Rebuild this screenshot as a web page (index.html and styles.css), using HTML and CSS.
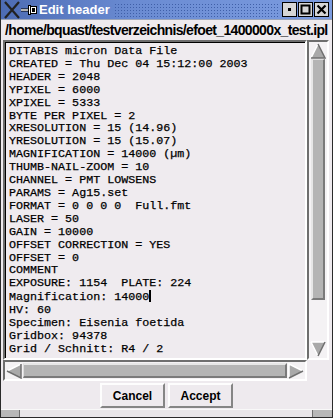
FILE: index.html
```html
<!DOCTYPE html>
<html>
<head>
<meta charset="utf-8">
<link rel="stylesheet" href="styles.css">
</head>
<body>
<div class="win">
  <div class="titlebar">
    <svg class="appicon" width="36" height="20" viewBox="0 0 36 20">
      <path d="M3 2 L17 18 M17 2 L3 18" stroke="#222" stroke-width="2.2" fill="none"/>
      <path d="M19 10 H27" stroke="#000" stroke-width="3"/>
      <path d="M19 10 H27" stroke="#fff" stroke-width="1.4"/>
      <rect x="26.5" y="5.5" width="2" height="9" fill="#fff" stroke="#000" stroke-width="1"/>
      <rect x="28.5" y="6.5" width="6" height="7" fill="#fff" stroke="#000" stroke-width="1"/>
      <rect x="30" y="8" width="3" height="4" fill="#000"/>
    </svg>
    <span class="title">Edit header</span>
    <span class="dots"></span>
    <div class="tbtns">
      <span class="tbtn"><svg width="13" height="13" viewBox="0 0 13 13"><rect x="5" y="5" width="3" height="3" fill="#000"/></svg></span>
      <span class="tbtn"><svg width="13" height="13" viewBox="0 0 13 13"><rect x="2.5" y="2.5" width="8" height="8" fill="none" stroke="#000" stroke-width="2"/></svg></span>
      <span class="tbtn"><svg width="13" height="13" viewBox="0 0 13 13"><path d="M2.5 2.5 L10.5 10.5 M10.5 2.5 L2.5 10.5" stroke="#000" stroke-width="2.2"/></svg></span>
    </div>
  </div>
  <div class="body">
    <div class="path">/home/bquast/testverzeichnis/efoet_1400000x_test.ipl</div>
    <div class="editrow">
      <div class="text"><div>DITABIS micron Data File</div><div>CREATED = Thu Dec 04 15:12:00 2003</div><div>HEADER = 2048</div><div>YPIXEL = 6000</div><div>XPIXEL = 5333</div><div>BYTE PER PIXEL = 2</div><div>XRESOLUTION = 15 (14.96)</div><div>YRESOLUTION = 15 (15.07)</div><div>MAGNIFICATION = 14000 (µm)</div><div>THUMB-NAIL-ZOOM = 10</div><div>CHANNEL = PMT LOWSENS</div><div>PARAMS = Ag15.set</div><div>FORMAT = 0 0 0 0  Full.fmt</div><div>LASER = 50</div><div>GAIN = 10000</div><div>OFFSET CORRECTION = YES</div><div>OFFSET = 0</div><div>COMMENT</div><div>EXPOSURE: 1154  PLATE: 224</div><div>Magnification: 14000<span class="cursor"></span></div><div>HV: 60</div><div>Specimen: Eisenia foetida</div><div>Gridbox: 94378</div><div>Grid / Schnitt: R4 / 2</div></div>
      <div class="vscroll">
        <svg class="arrow" width="16" height="16" viewBox="0 0 16 16"><polygon points="8,1 15,15 1,15" fill="#a9a9a9"/><path d="M1 15 L8 1" stroke="#fff" stroke-width="1.5"/><path d="M8 1 L15 15 H1" stroke="#707070" stroke-width="1.5" fill="none"/></svg>
        <div class="vthumb"></div>
        <div class="vspace"></div>
        <svg class="arrow" width="16" height="16" viewBox="0 0 16 16"><polygon points="1,1 15,1 8,15" fill="#a9a9a9"/><path d="M1 1 H15 M1 1 L8 15" stroke="#fff" stroke-width="1.5"/><path d="M15 1 L8 15" stroke="#707070" stroke-width="1.5"/></svg>
      </div>
    </div>
    <div class="hrow">
      <div class="hscroll">
        <svg class="arrow" width="16" height="16" viewBox="0 0 16 16"><polygon points="1,8 15,1 15,15" fill="#a9a9a9"/><path d="M15 1 L1 8" stroke="#fff" stroke-width="1.5"/><path d="M1 8 L15 15 V1" stroke="#707070" stroke-width="1.5" fill="none"/></svg>
        <div class="hthumb"></div>
        <svg class="arrow" width="16" height="16" viewBox="0 0 16 16"><polygon points="1,1 15,8 1,15" fill="#a9a9a9"/><path d="M1 15 V1 L15 8" stroke="#fff" stroke-width="1.5" fill="none"/><path d="M15 8 L1 15" stroke="#707070" stroke-width="1.5"/></svg>
      </div>
    </div>
    <div class="actions">
      <button class="btn">Cancel</button>
      <button class="btn">Accept</button>
    </div>
  </div>
  <div class="bottomframe">
    <span class="seg seg-l"></span>
    <span class="seg seg-m"></span>
    <span class="seg seg-r"></span>
  </div>
</div>
</body>
</html>
```
FILE: styles.css
```css
html, body {
  margin: 0;
  padding: 0;
  background: #edeaee;
}
.win {
  width: 333px;
  height: 418px;
  box-sizing: border-box;
  display: flex;
  flex-direction: column;
  background: #eeeaee;
  border-left: 1px solid #2a2a2a;
  border-right: 1px solid #2a2a2a;
  overflow: hidden;
}
.titlebar {
  height: 20px;
  flex: none;
  display: flex;
  align-items: center;
  background: linear-gradient(to right, #4d6cb4 0%, #6a8bd2 40%, #7c9ce0 100%);
  border-bottom: 1px solid #9aa4b8;
  box-sizing: border-box;
}
.appicon {
  flex: none;
  margin-left: 1px;
}
.title {
  font-family: "Liberation Sans", Arial, sans-serif;
  font-weight: bold;
  font-size: 13px;
  color: #fff;
  margin-left: 1px;
  white-space: nowrap;
}
.dots {
  flex: 1;
  height: 14px;
  margin: 0 4px 0 4px;
  background-image: radial-gradient(circle, #3f5fa8 0.8px, transparent 1px);
  background-size: 3px 3px;
}
.tbtns {
  display: flex;
  gap: 1px;
  margin-right: 3px;
}
.tbtn {
  width: 13px;
  height: 13px;
  background: #d6d6d6;
  border: 1px solid #000;
  display: flex;
}
.body {
  flex: 1;
  display: flex;
  flex-direction: column;
  padding: 0 2px 0 2px;
}
.path {
  height: 20px;
  font-family: "Liberation Sans", Arial, sans-serif;
  font-weight: bold;
  font-size: 14px;
  letter-spacing: -0.65px;
  line-height: 20px;
  color: #000;
  padding-left: 2px;
  white-space: nowrap;
  overflow: hidden;
}
.editrow {
  display: flex;
  height: 320px;
}
.text {
  width: 304px;
  box-sizing: border-box;
  border-style: solid;
  border-width: 2px;
  border-color: #6e6e6e #ffffff #ffffff #6e6e6e;
  box-shadow: inset 1px 1px 0 #000;
  background: #efebef;
  padding: 3px 0 0 4px;
  font-family: "Liberation Mono", "Courier New", monospace;
  font-size: 11.7px;
  line-height: 12.9px;
  color: #000;
  white-space: pre;
  overflow: hidden;
  -webkit-text-stroke: 0.25px #000;
}
.cursor {
  display: inline-block;
  width: 2px;
  height: 12px;
  background: #000;
  vertical-align: -2px;
}
.vscroll {
  width: 22px;
  box-sizing: border-box;
  border-style: solid;
  border-width: 2px;
  border-color: #6e6e6e #ffffff #ffffff #6e6e6e;
  background: #f4f2f4;
  display: flex;
  flex-direction: column;
  align-items: center;
  padding: 1px 0;
}
.arrow {
  flex: none;
}
.vthumb {
  width: 14px;
  height: 241px;
  box-sizing: border-box;
  background: #b4b4b4;
  border-style: solid;
  border-width: 1px 2px 2px 2px;
  border-color: #dcdcdc #7a7a7a #7a7a7a #e6e6e6;
}
.vspace {
  flex: 1;
}
.hrow {
  display: flex;
  height: 21px;
}
.hscroll {
  width: 304px;
  box-sizing: border-box;
  border-style: solid;
  border-width: 2px;
  border-color: #6e6e6e #ffffff #ffffff #6e6e6e;
  background: #f4f2f4;
  display: flex;
  align-items: center;
  padding: 0 1px;
}
.hthumb {
  flex: 1;
  height: 15px;
  box-sizing: border-box;
  background: #b4b4b4;
  border-style: solid;
  border-width: 2px 2px 2px 1px;
  border-color: #e6e6e6 #7a7a7a #7a7a7a #dcdcdc;
  margin: 0 1px 0 1px;
}
.actions {
  flex: 1;
  display: flex;
  justify-content: center;
  align-items: center;
  gap: 3px;
  padding-top: 1px;
}
.btn {
  width: 65px;
  height: 25px;
  box-sizing: border-box;
  background: #eeeaee;
  border-style: solid;
  border-width: 2px;
  border-color: #fdfdfd #858585 #858585 #fdfdfd;
  font-family: "Liberation Sans", Arial, sans-serif;
  font-weight: bold;
  font-size: 12px;
  color: #000;
  padding: 0;
  margin: 0;
}
.bottomframe {
  height: 7px;
  flex: none;
  display: flex;
  border-top: 1px solid #f8f8f8;
  border-bottom: 1px solid #2a2a2a;
  background: #b8b8b8;
}
.seg {
  height: 100%;
  box-sizing: border-box;
}
.seg-l {
  width: 19px;
  border-right: 1px solid #707070;
}
.seg-m {
  flex: 1;
  border-right: 1px solid #707070;
  background: #e9e6e9;
}
.seg-r {
  width: 19px;
}
```
